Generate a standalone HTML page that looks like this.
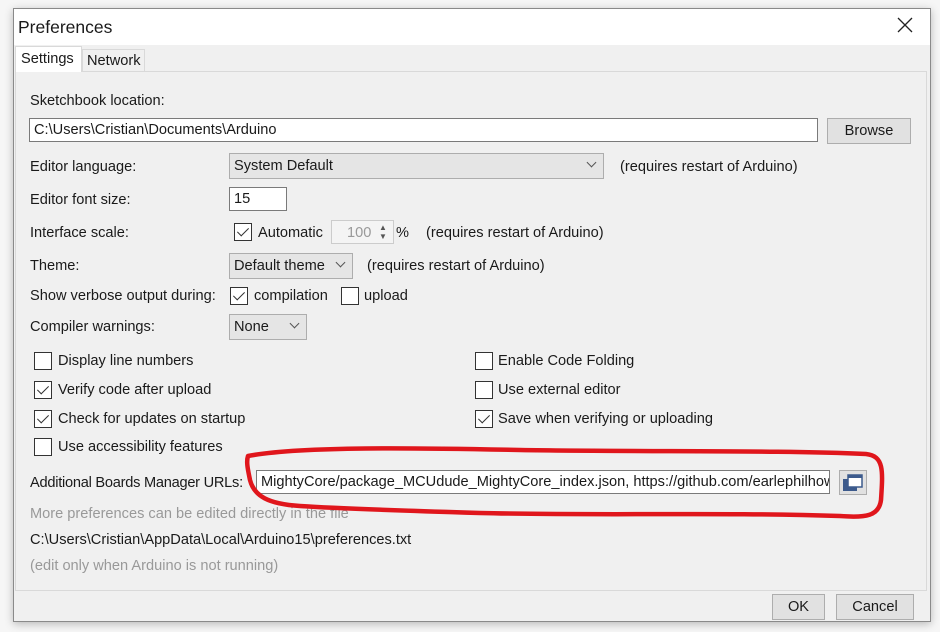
<!DOCTYPE html>
<html><head><meta charset="utf-8"><style>
*{box-sizing:border-box;margin:0;padding:0}
body{width:940px;height:632px;background:#f6f6f6;font-family:"Liberation Sans",sans-serif;font-size:14.6px;color:#1a1a1a;position:relative;overflow:hidden}
.a{position:absolute;white-space:nowrap}
.dlg{position:absolute;left:13px;top:8px;width:918px;height:614px;background:#f0f0f0;border:1px solid #8a8a8a;box-shadow:0 2px 8px rgba(0,0,0,.25)}
.title{position:absolute;left:0;top:0;width:100%;height:36px;background:#fff}
.panel{position:absolute;left:15px;top:71px;width:912px;height:520px;border:1px solid #d9d9d9;background:#f0f0f0}
.inp{position:absolute;background:#fff;border:1px solid #7a7a7a;height:24px;padding:3px 4px;white-space:nowrap;overflow:hidden}
.btn{position:absolute;background:#e1e1e1;border:1px solid #adadad;text-align:center;height:26px;line-height:25px}
.cb{position:absolute;width:18px;height:18px;border:1px solid #333;background:#fff}
.cb.c::after{content:"";position:absolute;left:5px;top:1px;width:5px;height:10px;border:solid #333;border-width:0 1.5px 1.5px 0;transform:rotate(45deg)}
.sel{position:absolute;background:#e5e5e5;border:1px solid #adadad;height:26px;padding:4px 4px}
.sel .ar{position:absolute;right:8px;top:5px;width:7px;height:7px;border:solid #555;border-width:0 1px 1px 0;transform:rotate(45deg)}
.g{color:#999}
</style></head><body>
<div class="dlg">
<div class="title"></div>
</div>
<div class="a" style="left:18px;top:17px;font-size:17.5px">Preferences</div>
<svg class="a" style="left:897px;top:17px" width="16" height="16"><path d="M1 1L15 15M15 1L1 15" stroke="#222" stroke-width="1.3"/></svg>
<div class="panel"></div>
<div class="a" style="left:15px;top:46px;width:67px;height:26px;background:#fff;border:1px solid #d9d9d9;border-bottom:none"></div>
<div class="a" style="left:21px;top:51px">Settings</div>
<div class="a" style="left:82px;top:49px;width:63px;height:22px;background:#f0f0f0;border:1px solid #d9d9d9;border-bottom:none"></div>
<div class="a" style="left:87px;top:53px">Network</div>

<div class="a" style="left:30px;top:93px">Sketchbook location:</div>
<div class="inp" style="left:29px;top:118px;width:789px">C:\Users\Cristian\Documents\Arduino</div>
<div class="btn" style="left:827px;top:118px;width:84px">Browse</div>

<div class="a" style="left:30px;top:159px">Editor language:</div>
<div class="sel" style="left:229px;top:153px;width:375px">System Default<span class="ar"></span></div>
<div class="a" style="left:620px;top:159px">(requires restart of Arduino)</div>

<div class="a" style="left:30px;top:192px">Editor font size:</div>
<div class="inp" style="left:229px;top:187px;width:58px">15</div>

<div class="a" style="left:30px;top:225px">Interface scale:</div>
<div class="cb c" style="left:234px;top:223px"></div>
<div class="a" style="left:258px;top:225px">Automatic</div>
<div class="a" style="left:331px;top:220px;width:63px;height:24px;border:1px solid #ccc;background:#f4f4f4"></div>
<div class="a g" style="left:347px;top:225px">100</div>
<div class="a" style="left:379px;top:223px;font-size:8px;color:#555;line-height:9px">▲<br>▼</div>
<div class="a" style="left:396px;top:225px">%</div>
<div class="a" style="left:426px;top:225px">(requires restart of Arduino)</div>

<div class="a" style="left:30px;top:258px">Theme:</div>
<div class="sel" style="left:229px;top:253px;width:124px">Default theme<span class="ar"></span></div>
<div class="a" style="left:367px;top:258px">(requires restart of Arduino)</div>

<div class="a" style="left:30px;top:288px">Show verbose output during:</div>
<div class="cb c" style="left:230px;top:287px"></div>
<div class="a" style="left:254px;top:288px">compilation</div>
<div class="cb" style="left:341px;top:287px"></div>
<div class="a" style="left:364px;top:288px">upload</div>

<div class="a" style="left:30px;top:319px">Compiler warnings:</div>
<div class="sel" style="left:229px;top:314px;width:78px">None<span class="ar"></span></div>

<div class="cb" style="left:34px;top:352px"></div><div class="a" style="left:58px;top:353px">Display line numbers</div>
<div class="cb c" style="left:34px;top:381px"></div><div class="a" style="left:58px;top:382px">Verify code after upload</div>
<div class="cb c" style="left:34px;top:410px"></div><div class="a" style="left:58px;top:411px">Check for updates on startup</div>
<div class="cb" style="left:34px;top:438px"></div><div class="a" style="left:58px;top:439px">Use accessibility features</div>
<div class="cb" style="left:475px;top:352px"></div><div class="a" style="left:498px;top:353px">Enable Code Folding</div>
<div class="cb" style="left:475px;top:381px"></div><div class="a" style="left:498px;top:382px">Use external editor</div>
<div class="cb c" style="left:475px;top:410px"></div><div class="a" style="left:498px;top:411px">Save when verifying or uploading</div>

<div class="a" style="left:30px;top:475px;letter-spacing:-0.25px">Additional Boards Manager URLs:</div>
<div class="inp" style="left:256px;top:470px;width:574px">MightyCore/package_MCUdude_MightyCore_index.json, https://github.com/earlephilhower</div>
<div class="a" style="left:839px;top:470px;width:28px;height:25px;border:1px solid #adadad;background:#e1e1e1"></div>
<svg class="a" style="left:842px;top:473px" width="22" height="20"><rect x="1" y="6" width="14" height="12" fill="#3c5a8c"/><rect x="6" y="2" width="14" height="12" fill="#fff" stroke="#3c5a8c" stroke-width="1.5"/><rect x="6" y="2" width="14" height="3" fill="#3c5a8c"/></svg>

<div class="a g" style="left:30px;top:506px">More preferences can be edited directly in the file</div>
<div class="a" style="left:30px;top:532px">C:\Users\Cristian\AppData\Local\Arduino15\preferences.txt</div>
<div class="a g" style="left:30px;top:558px">(edit only when Arduino is not running)</div>

<div class="btn" style="left:772px;top:594px;width:53px">OK</div>
<div class="btn" style="left:836px;top:594px;width:78px">Cancel</div>

<svg class="a" style="left:0;top:0" width="940" height="632"><path d="M248 456C300 446 420 448 520 450C650 452 780 450 866 454C884 456 883 470 881 500C879 516 866 518 840 516C720 512 600 516 480 513C380 510 330 508 300 506C268 504 254 496 250 480C248 470 246 462 248 456" fill="none" stroke="#e0161c" stroke-width="4.5" stroke-linecap="round"/></svg>
</body></html>
